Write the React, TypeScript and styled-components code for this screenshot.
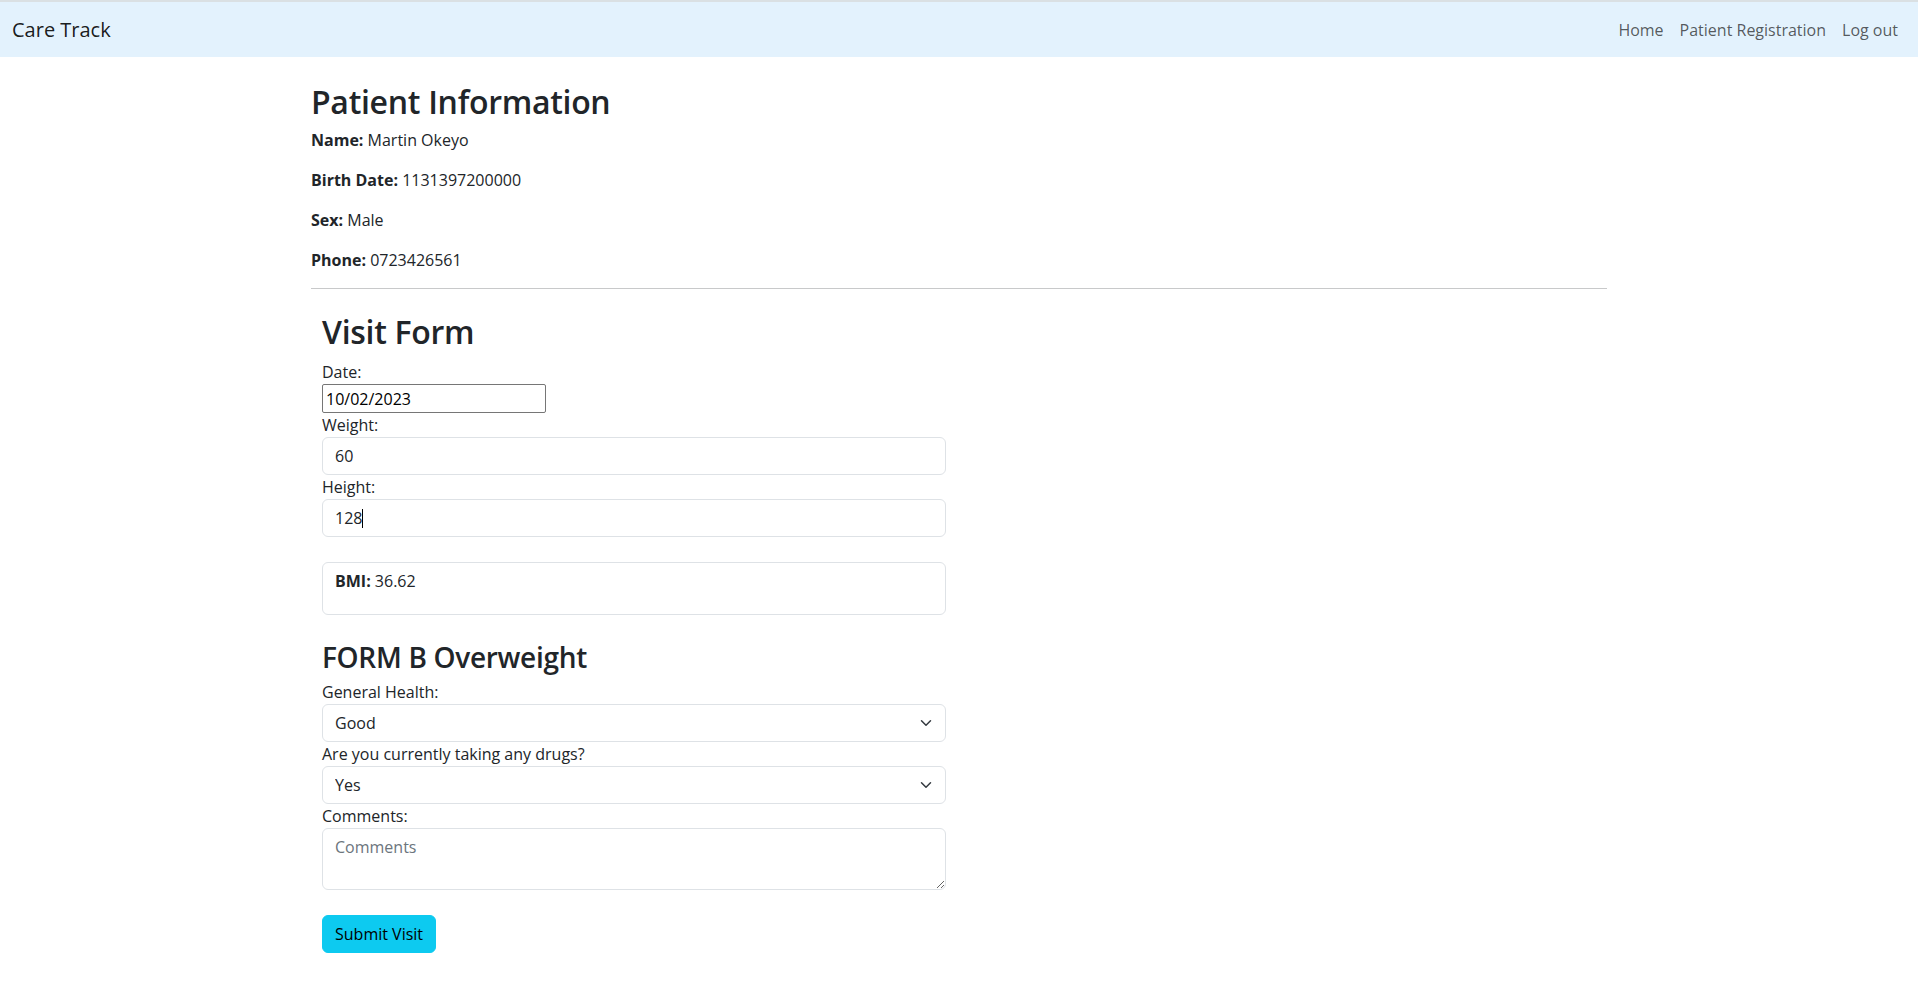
import React, { useState } from 'react'
import styled, { createGlobalStyle } from 'styled-components'

const GlobalStyle = createGlobalStyle`
  *, *::before, *::after {
    box-sizing: border-box;
  }
  body {
    margin: 0;
    font-family: "Open Sans", "Noto Sans", sans-serif;
    font-size: 16px;
    line-height: 1.5;
    color: #212529;
    background-color: #fff;
  }
`

const Navbar = styled.nav`
  display: flex;
  align-items: center;
  justify-content: space-between;
  height: 57px;
  padding: 0 12px;
  background-color: #e3f2fd;
  border-top: 2px solid #dae0e3;
`

const Brand = styled.a`
  font-size: 20px;
  line-height: 30px;
  padding: 5px 0;
  color: rgba(0, 0, 0, 0.9);
  text-decoration: none;
`

const NavLinks = styled.div`
  display: flex;
  align-items: center;
`

const NavLink = styled.a`
  padding: 8px;
  color: rgba(0, 0, 0, 0.65);
  text-decoration: none;
`

const Container = styled.main`
  max-width: 1320px;
  margin: 23px auto 0;
  padding: 0 12px;
`

const Heading = styled.h2<{ $size: number; $top: number; $bottom: number }>`
  margin: ${(p) => p.$top}px 0 ${(p) => p.$bottom}px;
  padding-top: 3px;
  font-size: ${(p) => p.$size}px;
  font-weight: 600;
  line-height: 1.2;
  letter-spacing: -0.3px;
`

const InfoRow = styled.p`
  margin: 0 0 16px;
  strong {
    font-weight: 700;
  }
`

const Divider = styled.hr`
  margin: 16px 0;
  border: 0;
  border-top: 1px solid #c8c9ca;
`

const FormColumn = styled.form`
  width: 624px;
  margin-left: 11px;
  padding-top: 5px;
`

const Label = styled.label`
  display: block;
  line-height: 24px;
`

const DateInput = styled.input`
  display: block;
  width: 224px;
  height: 29px;
  padding: 0 3px;
  font: inherit;
  color: #000;
  border: 1px solid #767676;
  border-radius: 2px;
  background: #fff;
  outline: none;
`

const Field = styled.div`
  position: relative;
`

const Control = styled.input`
  display: block;
  width: 100%;
  height: 38px;
  padding: 6px 12px;
  font: inherit;
  line-height: 24px;
  color: #212529;
  background: #fff;
  border: 1px solid #dee2e6;
  border-radius: 6px;
  outline: none;
`

const Caret = styled.span<{ $left: number }>`
  position: absolute;
  top: 10px;
  left: ${(p) => p.$left}px;
  width: 1px;
  height: 19px;
  background: #000;
`

const ResultBox = styled.div`
  margin-top: 25px;
  padding: 6px 12px;
  border: 1px solid #dee2e6;
  border-radius: 6px;
  p {
    margin: 0 0 15px;
  }
  strong {
    font-weight: 700;
  }
`

const Select = styled.select`
  display: block;
  width: 100%;
  height: 38px;
  padding: 6px 36px 6px 12px;
  font: inherit;
  line-height: 24px;
  color: #212529;
  background: #fff;
  border: 1px solid #dee2e6;
  border-radius: 6px;
  appearance: none;
  outline: none;
`

const Chevron = styled.svg`
  position: absolute;
  top: 50%;
  right: 12px;
  width: 16px;
  height: 12px;
  transform: translateY(-50%);
  pointer-events: none;
`

const TextArea = styled.textarea`
  display: block;
  width: 100%;
  height: 62px;
  padding: 6px 12px;
  font: inherit;
  line-height: 24px;
  color: #212529;
  border: 1px solid #dee2e6;
  border-radius: 6px;
  resize: vertical;
  outline: none;
  &::placeholder {
    color: #6c757d;
  }
`

const SubmitButton = styled.button`
  display: inline-block;
  margin-top: 25px;
  padding: 6px 12px;
  font: inherit;
  line-height: 24px;
  color: #000;
  background-color: #0dcaf0;
  border: 1px solid #0dcaf0;
  border-radius: 6px;
  cursor: pointer;
`

function SelectField({ value, options, onChange }: { value: string; options: string[]; onChange: (v: string) => void }) {
  return (
    <Field>
      <Select value={value} onChange={(e) => onChange(e.target.value)}>
        {options.map((o) => (
          <option key={o}>{o}</option>
        ))}
      </Select>
      <Chevron viewBox="0 0 16 16">
        <path d="m2 5 6 6 6-6" fill="none" stroke="#343a40" strokeWidth="2" strokeLinecap="round" strokeLinejoin="round" />
      </Chevron>
    </Field>
  )
}

const patient = [
  { label: 'Name:', value: 'Martin Okeyo' },
  { label: 'Birth Date:', value: '1131397200000' },
  { label: 'Sex:', value: 'Male' },
  { label: 'Phone:', value: '0723426561' },
]

export default function App() {
  const [weight, setWeight] = useState('60')
  const [height, setHeight] = useState('128')
  const [health, setHealth] = useState('Good')
  const [drugs, setDrugs] = useState('Yes')

  return (
    <>
      <GlobalStyle />
      <Navbar>
        <Brand href="#">Care Track</Brand>
        <NavLinks>
          <NavLink href="#">Home</NavLink>
          <NavLink href="#">Patient Registration</NavLink>
          <NavLink href="#">Log out</NavLink>
        </NavLinks>
      </Navbar>

      <Container>
        <Heading $size={32} $top={0} $bottom={6.5}>
          Patient Information
        </Heading>
        {patient.map((row) => (
          <InfoRow key={row.label}>
            <strong>{row.label}</strong> {row.value}
          </InfoRow>
        ))}
        <Divider />

        <FormColumn onSubmit={(e) => e.preventDefault()}>
          <Heading $size={32} $top={0} $bottom={9}>
            Visit Form
          </Heading>
          <Label>Date:</Label>
          <DateInput type="text" defaultValue="10/02/2023" />
          <Label>Weight:</Label>
          <Control value={weight} onChange={(e) => setWeight(e.target.value)} />
          <Label>Height:</Label>
          <Field>
            <Control value={height} onChange={(e) => setHeight(e.target.value)} />
            <Caret $left={40} />
          </Field>

          <ResultBox>
            <p>
              <strong>BMI:</strong> 36.62
            </p>
          </ResultBox>

          <Heading as="h3" $size={28} $top={22.5} $bottom={5.5}>
            FORM B Overweight
          </Heading>
          <Label>General Health:</Label>
          <SelectField value={health} options={['Good', 'Fair', 'Poor']} onChange={setHealth} />
          <Label>Are you currently taking any drugs?</Label>
          <SelectField value={drugs} options={['Yes', 'No']} onChange={setDrugs} />
          <Label>Comments:</Label>
          <TextArea rows={2} placeholder="Comments" />

          <SubmitButton type="submit">Submit Visit</SubmitButton>
        </FormColumn>
      </Container>
    </>
  )
}
